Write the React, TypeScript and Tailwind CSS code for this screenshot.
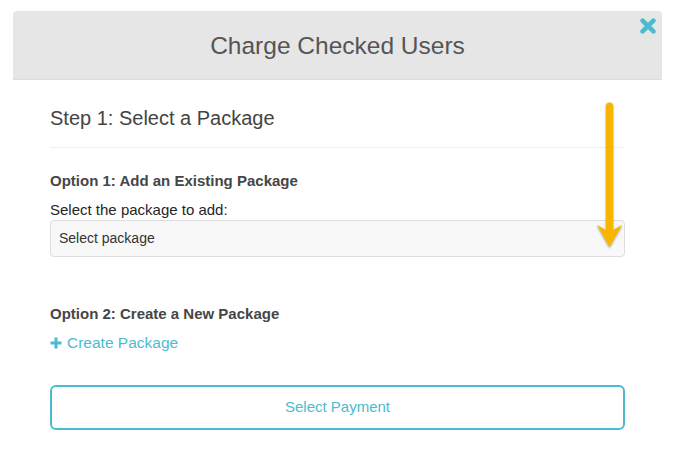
export default function App() {
  return (
    <div
      className="relative h-[462px] w-[673px] overflow-hidden bg-white pl-[13px] pt-[11px]"
      style={{ fontFamily: '"Liberation Sans", Arial, sans-serif' }}
    >
      <div className="w-[649px] rounded-[4px] bg-white">
        {/* header */}
        <div className="relative flex h-[69px] items-center justify-center rounded-t-[4px] border-b border-[#dcdcdc] bg-[#e6e6e6]">
          <h2 className="pt-[3px] text-[24.5px] font-normal text-[#555]">
            Charge Checked Users
          </h2>
          <button className="absolute right-[6px] top-[7px]" aria-label="close">
            <svg width="16" height="16" viewBox="0 0 16 16">
              <path
                d="M2.6 2.6 L13.4 13.4 M13.4 2.6 L2.6 13.4"
                stroke="#4bbccf"
                strokeWidth="4.6"
                strokeLinecap="round"
              />
            </svg>
          </button>
        </div>

        {/* body */}
        <div className="px-[37px] pb-[21px] pt-[24px]">
          <h3 className="text-[20px] leading-[28px] text-[#444]">
            Step 1: Select a Package
          </h3>
          <div className="mt-[15px] border-t border-[#eeeeee]" />

          <h4 className="mt-[23px] text-[15px] font-bold leading-[20px] text-[#464646]">
            Option 1: Add an Existing Package
          </h4>
          <p className="mt-[9px] text-[15px] leading-[20px] text-[#262626]">
            Select the package to add:
          </p>
          <div className="flex h-[37px] items-center rounded-[4px] border border-[#dddddd] bg-[#f8f8f8] px-[8px] text-[14px] text-[#333]">
            Select package
          </div>

          <h4 className="mt-[47px] text-[15px] font-bold leading-[20px] text-[#464646]">
            Option 2: Create a New Package
          </h4>
          <a className="mt-[9px] flex items-center gap-[5px] text-[15.5px] leading-[20px] text-[#4bbccf]">
            <svg width="12" height="12" viewBox="0 0 12 12">
              <path d="M6 0.5 V11.5 M0.5 6 H11.5" stroke="#4bbccf" strokeWidth="3" />
            </svg>
            Create Package
          </a>

          <button className="mt-[32px] flex h-[45px] w-full items-center justify-center rounded-[6px] border-2 border-[#4bbccf] bg-white text-[15px] text-[#4bbccf]">
            Select Payment
          </button>
        </div>
      </div>

      {/* annotation arrow */}
      <svg
        className="pointer-events-none absolute left-[590px] top-[95px]"
        width="40"
        height="165"
        viewBox="0 0 40 165"
      >
        <defs>
          <filter id="sh" x="-50%" y="-10%" width="200%" height="120%">
            <feDropShadow dx="0" dy="1" stdDeviation="1.2" floodColor="#000" floodOpacity="0.45" />
          </filter>
        </defs>
        <g filter="url(#sh)">
          <path d="M19.5 11 V138" stroke="#f7b500" strokeWidth="7" strokeLinecap="round" />
          <path d="M7 130 L19.5 152 L32 130 L19.5 137 Z" fill="#f7b500" />
        </g>
      </svg>
    </div>
  );
}
